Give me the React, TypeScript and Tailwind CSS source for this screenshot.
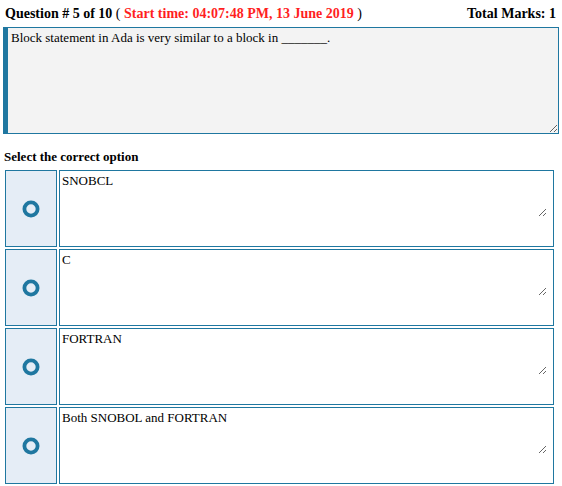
import { useState } from "react";

const OPTIONS = ["SNOBCL", "C", "FORTRAN", "Both SNOBOL and FORTRAN"];

function RadioRing() {
  return (
    <svg width="18" height="18" viewBox="0 0 18 18" aria-hidden>
      <circle cx="9" cy="9" r="6.6" fill="none" stroke="#1f77a0" strokeWidth="3.8" />
    </svg>
  );
}

export default function App() {
  const [picked, setPicked] = useState<number | null>(null);

  return (
    <div className="w-[562px] min-h-[486px] bg-white text-black font-['Liberation_Serif','Times_New_Roman',serif] text-[13px]">
      {/* header */}
      <div className="flex items-baseline justify-between pl-[5px] pr-[6px] pt-[6px] h-[27px] text-[14px] leading-[16px]">
        <div className="font-bold">
          Question # 5 of 10 <span className="font-normal">(</span>{" "}
          <span className="text-[#ff1f1f]">Start time: 04:07:48 PM, 13 June 2019</span>{" "}
          <span className="font-normal">)</span>
        </div>
        <div className="font-bold">Total Marks: 1</div>
      </div>

      {/* question */}
      <div className="pl-[3px]">
        <textarea
          readOnly
          defaultValue="Block statement in Ada is very similar to a block in _______."
          className="block w-[556px] h-[107px] bg-[#f3f3f3] border border-[#1f77a0] border-l-[5px] pl-[3px] pt-[2px] text-[13px] leading-[15px] outline-none resize"
        />
      </div>

      <div className="pl-[4px] pt-[15px] pb-[5px] font-bold text-[13px] leading-[16px]">
        Select the correct option
      </div>

      {/* options */}
      <div className="flex flex-col gap-[2px] pl-[5px]">
        {OPTIONS.map((opt, i) => (
          <div key={opt} className="flex gap-[2px] h-[77px]">
            <button
              type="button"
              onClick={() => setPicked(i)}
              className="w-[52px] h-full flex items-center justify-center bg-[#e5edf6] border border-[#1f77a0]"
            >
              <RadioRing />
            </button>
            <div
              className={`w-[495px] h-full border border-[#1f77a0] ${picked === i ? "bg-[#f7fbff]" : "bg-white"}`}
            >
              <textarea
                readOnly
                defaultValue={opt}
                className="block w-[487px] h-[46px] bg-transparent pl-[2px] pt-[2px] text-[13px] leading-[15px] outline-none resize"
              />
            </div>
          </div>
        ))}
      </div>
    </div>
  );
}
